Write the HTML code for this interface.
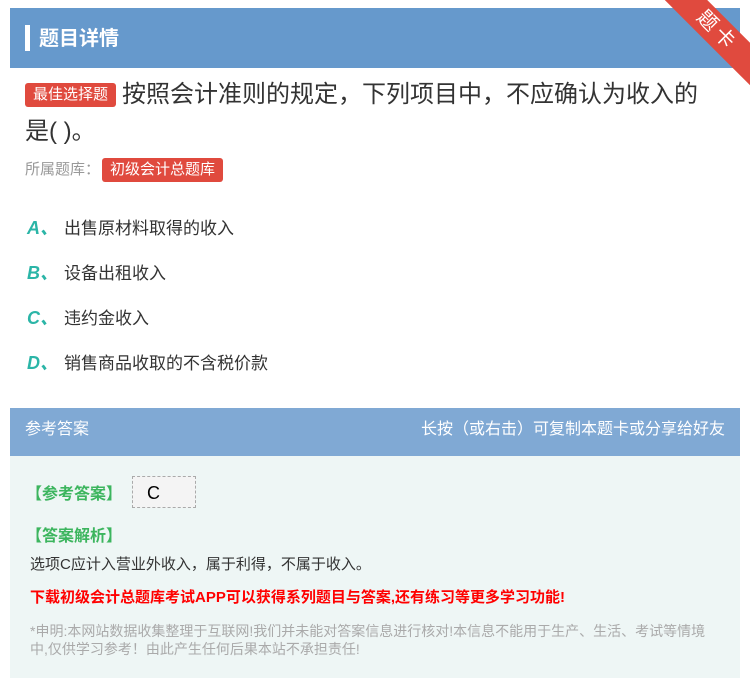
<!DOCTYPE html>
<html><head><meta charset="utf-8"><style>
body{margin:0;width:750px;height:678px;background:#fff;position:relative;overflow:hidden;font-family:"Liberation Sans","Noto Sans CJK SC",sans-serif}
.hd{position:absolute;left:10px;top:8px;width:730px;height:60px;background:#6699cc}
.hd .bar{position:absolute;left:15px;top:17px;width:5px;height:26px;background:#fff}
.hd .t{position:absolute;left:29px;top:14px;color:#fff;font-size:20px;font-weight:bold}
.rib{position:absolute;right:-42px;top:16px;width:150px;height:30px;background:#e04a3e;transform:rotate(45deg);color:#fff;font-size:20px;text-align:center;line-height:30px;letter-spacing:4px}
.q{position:absolute;left:25px;top:76px;width:690px;font-size:24px;line-height:37px;color:#333}
.tag{display:inline-block;background:#e04a3e;color:#fff;font-size:15px;line-height:24px;padding:0 8px;border-radius:3px;vertical-align:3px;margin-right:6px}
.src{position:absolute;left:25px;top:158px;font-size:15px;color:#999}
.src .tag{vertical-align:0;margin-left:2px}
.opt{position:absolute;left:27px;font-size:17px;color:#333}
.opt b{color:#2bb5a7;font-style:italic;display:inline-block;width:37px;font-size:18px}
.ah{position:absolute;left:10px;top:408px;width:730px;height:48px;background:#80a9d4;color:#fff;font-size:16px;line-height:44px}
.ab{position:absolute;left:10px;top:456px;width:730px;height:222px;background:#eef6f5}
.g{color:#3cb55e;font-size:16px;font-weight:bold;position:absolute}
</style></head><body>
<div class="hd"><div class="bar"></div><div class="t">题目详情</div></div>
<div class="rib">题卡</div>
<div class="q"><span class="tag">最佳选择题</span>按照会计准则的规定，下列项目中，不应确认为收入的是( )。</div>
<div class="src">所属题库：<span class="tag">初级会计总题库</span></div>
<div class="opt" style="top:214px"><b>A、</b>出售原材料取得的收入</div>
<div class="opt" style="top:259px"><b>B、</b>设备出租收入</div>
<div class="opt" style="top:304px"><b>C、</b>违约金收入</div>
<div class="opt" style="top:349px"><b>D、</b>销售商品收取的不含税价款</div>
<div class="ah"><span style="position:absolute;left:15px">参考答案</span><span style="position:absolute;right:15px">长按（或右击）可复制本题卡或分享给好友</span></div>
<div class="ab">
<div class="g" style="left:16px;top:24px">【参考答案】</div>
<div style="position:absolute;left:122px;top:20px;width:64px;height:32px;background:#f4f4f4;border:1px dashed #aaa;font-size:18px;line-height:32px;padding-left:14px;box-sizing:border-box">C</div>
<div class="g" style="left:16px;top:66px">【答案解析】</div>
<div style="position:absolute;left:20px;top:97px;font-size:15px;color:#333">选项C应计入营业外收入，属于利得，不属于收入。</div>
<div style="position:absolute;left:20px;top:130px;font-size:15px;color:#f00;font-weight:bold">下载初级会计总题库考试APP可以获得系列题目与答案,还有练习等更多学习功能!</div>
<div style="position:absolute;left:20px;top:166px;width:690px;font-size:14px;line-height:18px;color:#aaa">*申明:本网站数据收集整理于互联网!我们并未能对答案信息进行核对!本信息不能用于生产、生活、考试等情境中,仅供学习参考！由此产生任何后果本站不承担责任!</div>
</div>
</body></html>
